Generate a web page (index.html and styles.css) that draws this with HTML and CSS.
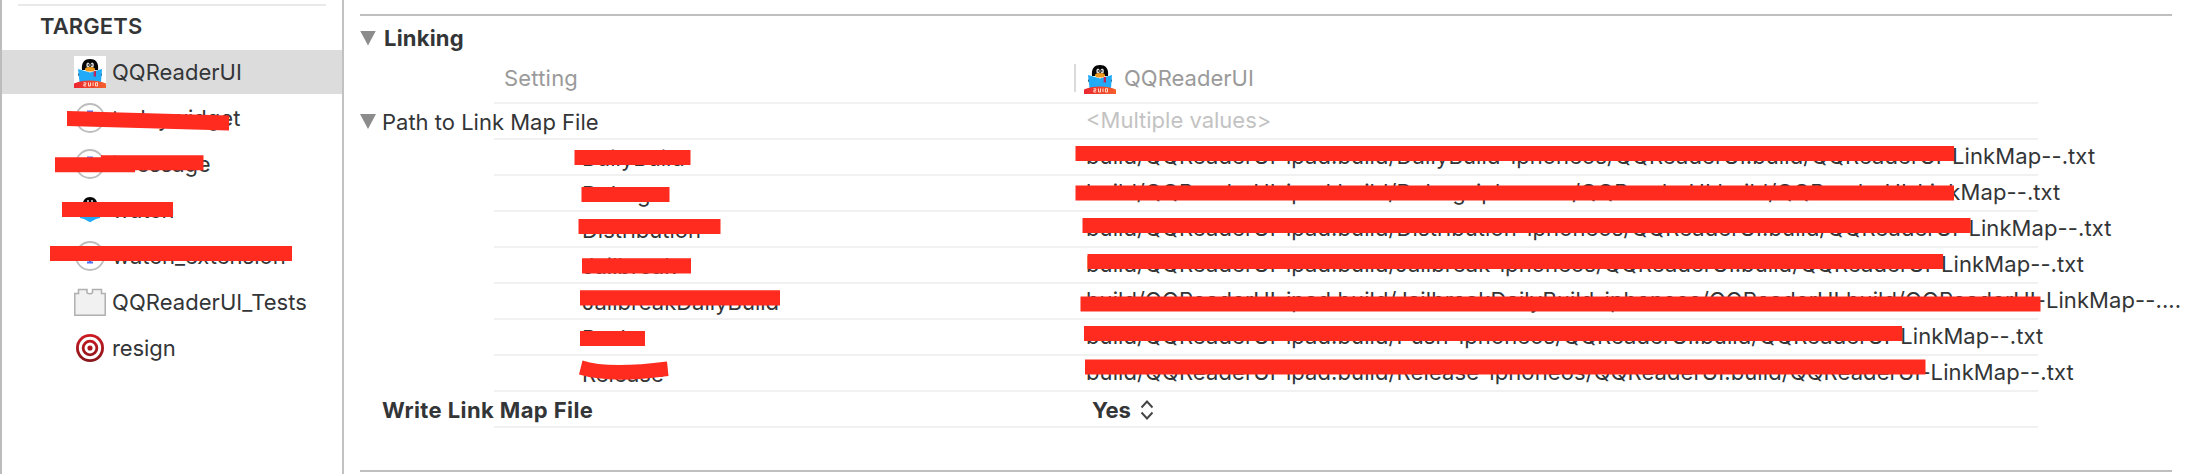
FILE: index.html
```
<!DOCTYPE html>
<html lang="en">
<head>
<meta charset="utf-8">
<title>Build Settings</title>
<link rel="stylesheet" href="styles.css">
</head>
<body>
<svg class="defs" width="0" height="0" aria-hidden="true">
  <defs>
    <linearGradient id="band" x1="0" x2="1" y1="0" y2="0"><stop offset="0" stop-color="#ea2530"/><stop offset="1" stop-color="#f4602c"/></linearGradient>
    <linearGradient id="ring" x1="0" x2="0" y1="0" y2="1"><stop offset="0" stop-color="#cf1a22"/><stop offset="1" stop-color="#86161b"/></linearGradient>
    <symbol id="penguin" viewBox="0 0 32 32">
      <path d="M8 14C7 6 11 3 16 3s9 3 8 11z" fill="#050505"/>
      <ellipse cx="14" cy="9" rx="1.7" ry="2.5" fill="#ddd"/><ellipse cx="18.200" cy="9" rx="1.700" ry="2.500" fill="#ddd"/>
      <circle cx="14.400" cy="9" r=".8"/><circle cx="17.800" cy="9" r=".8"/>
      <circle cx="5.500" cy="18.500" r="1.500" fill="#222"/><circle cx="26.500" cy="18.500" r="1.500" fill="#222"/>
      <path d="M4 13l12 3.500L28 13l-1 13H5.500z" fill="#21aaf7"/>
      <ellipse cx="16" cy="13.300" rx="5" ry="2.300" fill="#f29a1c"/>
      <path d="M19.700 15.300l2.300-.6v6.300l-1.200-1-1.100 1.300z" fill="#b8265c"/>
      <path d="M0 32v-4.500C8 23.600 24 23.600 32 27.500V32z" fill="url(#band)"/>
      <path d="M9.500 26.800h2.300v1.500h-2v1.700h2.400M14.500 26.500v3.500h2v-3.500M19 26.500v3.500M21.500 26.700h2v3.300h-2z" fill="none" stroke="#ffd9c8" stroke-width="1"/>
    </symbol>
    <symbol id="extension" viewBox="0 0 32 32">
      <circle cx="16" cy="16" r="14" fill="#fff" stroke="#bdbdbd" stroke-width="1.800"/>
      <path d="M13 9.500h6M16 9.500v13M13 22.500h6" stroke="#4a72f5" stroke-width="2" fill="none"/>
    </symbol>
  </defs>
</svg>

<div class="window">
  <aside class="sidebar">
    <div class="sidebar-rule"></div>
    <h2 class="sidebar-title">TARGETS</h2>
    <ul class="targets">
      <li class="target selected"><svg class="icon framed"><use href="#penguin"/></svg><span class="app-name">QQReaderUI</span></li>
      <li class="target"><svg class="icon"><use href="#extension"/></svg><span>todaywidget</span></li>
      <li class="target"><svg class="icon"><use href="#extension"/></svg><span class="tight">imessage</span></li>
      <li class="target"><svg class="icon" viewBox="0 0 32 32"><path d="M9 12C8 6 12 3 16 3s8 3 7 9z" fill="#050505"/><path d="M14 6v3M18 6v3" stroke="#ddd" stroke-width="1.500"/><path d="M6 14h20v10l-4 1-6 3.300L10 25l-4-1z" fill="#21aaf7"/></svg><span class="tight">watch</span></li>
      <li class="target"><svg class="icon"><use href="#extension"/></svg><span>watch_extension</span></li>
      <li class="target"><svg class="icon" viewBox="0 0 32 32"><path d="M.8 29.200V7.500h3.700V3.500h8.500v3.300c1 1.200 4.500 1.200 5.500 0V3.500H27.500v4h3.700v21.700z" fill="#f1f1f1" stroke="#b0b0b0" stroke-width="1.500"/></svg><span class="even">QQReaderUI_Tests</span></li>
      <li class="target"><svg class="icon" viewBox="0 0 32 32"><circle cx="16" cy="16" r="14" fill="url(#ring)"/><circle cx="16" cy="16" r="9.700" fill="none" stroke="#fff" stroke-width="2.900"/><circle cx="16" cy="16" r="4" fill="none" stroke="#fff" stroke-width="2.900"/></svg><span class="tight">resign</span></li>
    </ul>
  </aside>

  <main class="settings">
    <div class="section-rule"></div>
    <div class="section-head"><span class="triangle"></span><span class="section-name">Linking</span></div>
    <div class="columns">
      <span class="column-name">Setting</span>
      <div class="column-target"><span class="divider"></span><svg class="icon"><use href="#penguin"/></svg><span class="app-name">QQReaderUI</span></div>
    </div>
    <div class="row"><span class="triangle"></span><span class="label">Path to Link Map File</span><span class="value multiple">&lt;Multiple values&gt;</span></div>
    <div class="row config"><span class="label">DailyBuild</span><span class="value">build/QQReaderUI-ipad.build/DailyBuild-iphoneos/QQReaderUI.build/QQReaderUI-LinkMap--.txt</span></div>
    <div class="row config"><span class="label">Debug</span><span class="value">build/QQReaderUI-ipad.build/Debug-iphoneos/QQReaderUI.build/QQReaderUI-LinkMap--.txt</span></div>
    <div class="row config"><span class="label">Distribution</span><span class="value">build/QQReaderUI-ipad.build/Distribution-iphoneos/QQReaderUI.build/QQReaderUI-LinkMap--.txt</span></div>
    <div class="row config"><span class="label">Jailbreak</span><span class="value">build/QQReaderUI-ipad.build/Jailbreak-iphoneos/QQReaderUI.build/QQReaderUI-LinkMap--.txt</span></div>
    <div class="row config"><span class="label">JailbreakDailyBuild</span><span class="value">build/QQReaderUI-ipad.build/JailbreakDailyBuild-iphoneos/QQReaderUI.build/QQReaderUI-LinkMap--....</span></div>
    <div class="row config"><span class="label">Push</span><span class="value">build/QQReaderUI-ipad.build/Push-iphoneos/QQReaderUI.build/QQReaderUI-LinkMap--.txt</span></div>
    <div class="row config"><span class="label">Release</span><span class="value">build/QQReaderUI-ipad.build/Release-iphoneos/QQReaderUI.build/QQReaderUI-LinkMap--.txt</span></div>
    <div class="row write"><span class="label">Write Link Map File</span><span class="value popup"><span>Yes</span><svg class="stepper" viewBox="0 0 14 22"><path d="M1.500 8.500L7 2.500l5.500 6M1.500 13.500l5.500 6 5.500-6" fill="none" stroke="#444" stroke-width="1.900"/></svg></span></div>
    <div class="section-rule last"></div>
  </main>
</div>

<svg class="strikes" viewBox="0 0 2188 474" aria-hidden="true">
  <path d="M67 111L229 115.500V130.500L67 126zM55 157.300H101V155.300H203.500V170.300H135V172.300H55zM62 202H173V217H62zM50 246H292V261H50z"/>
  <path d="M574.500 150H690.500V165H574.500zM581.500 187H669.500V202H581.500zM578.500 219H720.500V234H578.500zM582 258.300H691V273.500H582zM580 290.300H780V305.500H580zM580 331H645V346H580zM582.500 360.500Q608 369 667 361.500L668.500 376Q610 384 579 374.500z"/>
  <path d="M1075.500 146H1954V161H1075.500zM1075.500 185.500H1954V200.500H1075.500zM1082.500 218H1970.500V233H1082.500zM1087.500 254H1943V269H1087.500zM1080.500 296.500H2040.500V311.500H1080.500zM1084 326H1902V341H1084zM1085 359.500H1925.500V374.500H1085z"/>
</svg>
</body>
</html>
```
FILE: styles.css
```
* { box-sizing: border-box; }

body {
  margin: 0;
  overflow: hidden;
  background: #fff;
  color: #333537;
  font: 22px/34px Inter, "Liberation Sans", sans-serif;
  white-space: nowrap;
}

.defs { position: absolute; }

.window {
  display: flex;
  width: 2188px;
  height: 474px;
  border-left: 2px solid #bcbcbc;
}

.icon { flex: none; width: 32px; height: 32px; }
.icon.framed { background: #fff; }
.app-name { letter-spacing: 0.02px; }

.sidebar {
  flex: none;
  width: 342px;
  padding-top: 4px;
  border-right: 2px solid #c2c2c2;
}

.sidebar-rule { height: 2px; margin: 0 16px; background: #e9e9e9; }

.sidebar-title {
  height: 44px;
  margin: 0;
  padding: 3px 0 0 38px;
  font-size: 22px;
  font-weight: 600;
  line-height: 34px;
  letter-spacing: 0.1px;
}

.targets { margin: 0; padding: 0; list-style: none; }

.target {
  display: flex;
  align-items: center;
  gap: 6px;
  height: 44px;
  margin-bottom: 2px;
  padding-left: 72px;
}

.target.selected { background: #dcdcdc; }
.tight { letter-spacing: -0.1px; }
.even { letter-spacing: 0.06px; }

.settings { flex: 1; min-width: 0; padding-top: 14px; }

.section-rule { height: 2px; margin: 0 16px; background: #bfbfbf; }
.section-rule.last { margin-top: 42px; }

.triangle {
  width: 16px;
  height: 15px;
  background: #8c8c8c;
  clip-path: polygon(0 0, 100% 0, 50% 100%);
}

.section-head {
  display: flex;
  align-items: center;
  gap: 8px;
  height: 44px;
  padding-left: 16px;
  font-weight: 700;
}

.section-name { letter-spacing: 0.2px; }

.columns {
  display: grid;
  grid-template-columns: 570px 1fr;
  height: 44px;
  padding-left: 160px;
  color: #9a9a9a;
  background: linear-gradient(#f1f1f1, #f1f1f1) 150px bottom / 1544px 2px no-repeat;
}

.columns > * { height: 36px; line-height: 36px; }
.column-name { letter-spacing: 0.2px; }
.column-target { display: flex; align-items: center; }
.divider { width: 2px; height: 28px; margin-right: 8px; background: #dadada; }
.column-target .app-name { margin-left: 8px; }

.row {
  display: grid;
  grid-template-columns: 16px 23px 687px 1fr;
  height: 36px;
  padding-left: 16px;
  background: linear-gradient(#f1f1f1, #f1f1f1) 150px bottom / 1544px 2px no-repeat;
}

.row .triangle { margin-top: 10px; }

.label { grid-column: 2 / 4; padding: 1px 0 0 6px; line-height: 34px; }
.value { grid-column: 4; height: 34px; line-height: 33px; letter-spacing: 0.09px; }
.config .label { padding-left: 206px; letter-spacing: -0.02px; }
.multiple { color: #c3c3c3; letter-spacing: 0; line-height: 32px; }

.write { font-weight: 700; }
.write .label { letter-spacing: 0.4px; }
.popup { display: flex; align-items: center; gap: 9px; padding: 2px 0 0 6px; letter-spacing: -0.2px; }
.stepper { width: 14px; height: 22px; }

.strikes {
  position: absolute;
  top: 0;
  left: 0;
  width: 2188px;
  height: 474px;
  fill: #fe2b1e;
}
```
